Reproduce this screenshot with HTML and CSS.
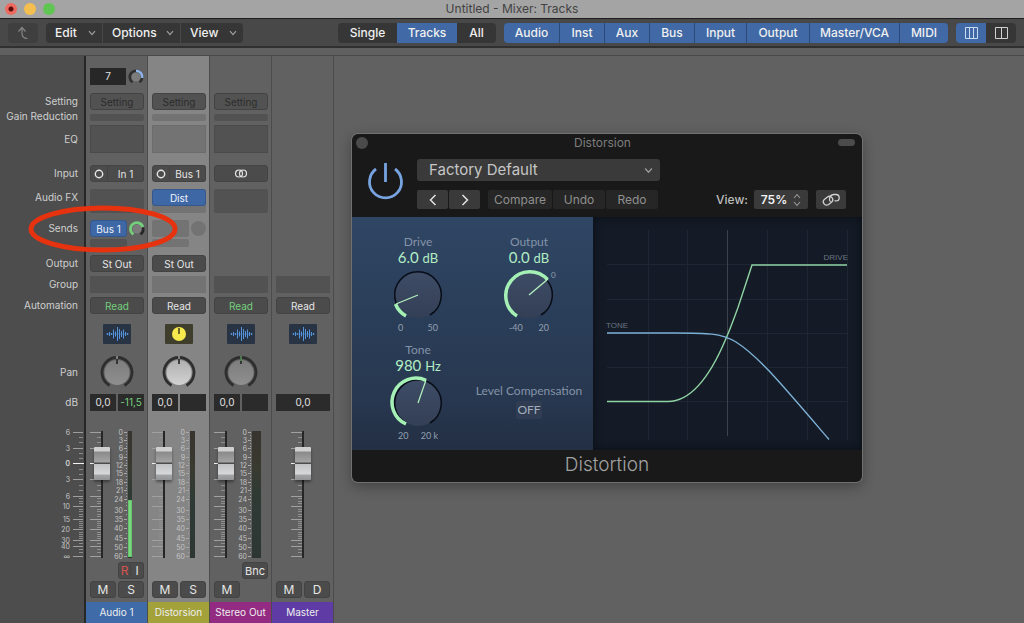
FILE: index.html
```html
<!DOCTYPE html>
<html lang="en">
<head>
<meta charset="utf-8">
<title>Untitled - Mixer: Tracks</title>
<link rel="stylesheet" href="styles.css">
</head>
<body>
<svg class="defs" width="0" height="0" aria-hidden="true">
  <defs>
    <symbol id="chevron" viewBox="0 0 8 6"><path d="M1 1.2 4 4.6 7 1.2" fill="none" stroke="currentColor" stroke-width="1.2"/></symbol>
    <symbol id="wave" viewBox="0 0 28 20">
      <path d="M4.500 9v2M6.500 8v4M8.500 9v2M10.500 5.500v9M12.500 7.500v5M14.500 3v14M16.500 5v10M18.500 7v6M20.500 5.500v9M22.500 8v4M24.500 9v2" stroke="#5593da"/>
      <path d="M3 10h23" stroke="#4f8fd6" stroke-width=".5"/>
    </symbol>
    <symbol id="ticks" viewBox="0 0 12 127" overflow="visible">
      <path d="M0 1.5h11M0 17.5h11M0 48.5h11M0 65.5h11M0 75.5h11M0 88.5h11M0 98.5h11M0 109.5h11M0 115.5h11M0 125.5h11" stroke="#a0a0a0"/>
      <path d="M0 32.5h4" stroke="#f2f2f2"/>
      <path d="M7 6.5h4M7 11.5h4M7 54.5h4M7 59.5h4M7 67.5h4M7 70.5h4M7 72.5h4M7 78.5h4M7 80.5h4M7 83.5h4M7 85.5h4M7 90.5h4M7 92.5h4M7 94.5h4M7 96.5h4M7 101.5h4M7 103.5h4M7 105.5h4M7 107.5h4M7 112.5h4M7 118.5h4M7 121.5h4" stroke="#8f8f8f"/>
    </symbol>
    <symbol id="meter-scale" viewBox="0 0 38 127" overflow="visible">
      <g class="scale-text" text-anchor="end">
        <text x="33" y="4">0</text><text x="33" y="12">3</text><text x="33" y="20">6</text><text x="33" y="29">9</text><text x="33" y="37">12</text><text x="33" y="45">15</text><text x="33" y="54">18</text><text x="33" y="62">21</text><text x="33" y="71">24</text><text x="33" y="82">30</text><text x="33" y="91">35</text><text x="33" y="100">40</text><text x="33" y="110">45</text><text x="33" y="119">50</text><text x="33" y="128">60</text>
      </g>
      <path d="M34 1.5h3M34 9.5h3M34 17.5h3M34 26.5h3M34 34.5h3M34 42.5h3M34 51.5h3M34 59.5h3M34 68.5h3M34 79.5h3M34 88.5h3M34 97.5h3M34 107.5h3M34 116.5h3M34 125.5h3" stroke="#a9a9a9"/>
      <path d="M36 4.5h1M36 7.5h1M36 12.5h1M36 15.5h1M36 20.5h1M36 23.5h1M36 29.5h1M36 32.5h1M36 37.5h1M36 40.5h1M36 45.5h1M36 48.5h1M36 54.5h1M36 57.5h1M36 62.5h1M36 65.5h1M36 71.5h1M36 74.5h1M36 83.5h1M36 92.5h1M36 102.5h1M36 112.5h1M36 121.5h1" stroke="#a0a0a0"/>
    </symbol>
    <linearGradient id="meter-off" x1="0" y1="0" x2="0" y2="1"><stop offset="0" stop-color="#37342e"/><stop offset=".3" stop-color="#393a30"/><stop offset=".5" stop-color="#2f3a35"/><stop offset="1" stop-color="#2d3633"/></linearGradient>
    <linearGradient id="pan-dim" x1="0" y1="0" x2="0" y2="1"><stop offset="0" stop-color="#7d7d7d"/><stop offset="1" stop-color="#8f8f8f"/></linearGradient>
    <linearGradient id="pan-lit" x1="0" y1="0" x2="0" y2="1"><stop offset="0" stop-color="#b0b0b0"/><stop offset="1" stop-color="#d2d2d2"/></linearGradient>
    <linearGradient id="dial" x1="0" y1="0" x2="0" y2="1"><stop offset="0" stop-color="#3e4c66"/><stop offset="1" stop-color="#333f55"/></linearGradient>
  </defs>
</svg>

<header class="titlebar">
  <span class="lights"><i class="light light-close"></i><i class="light light-min"></i><i class="light light-max"></i></span>
  <h1 class="window-title">Untitled - Mixer: Tracks</h1>
</header>

<nav class="toolbar">
  <button class="tool back" aria-label="Up one level"><svg width="12" height="14" viewBox="0 0 12 14"><path d="M1.500 5.500 5 1.500 8.500 5.500M5 2v5c0 4 2 5.500 5.500 5.500" fill="none" stroke="#858585" stroke-width="1.200"/></svg></button>
  <div class="group menus">
    <button class="tool">Edit <svg width="8" height="6"><use href="#chevron"/></svg></button>
    <button class="tool">Options <svg width="8" height="6"><use href="#chevron"/></svg></button>
    <button class="tool">View <svg width="8" height="6"><use href="#chevron"/></svg></button>
  </div>
  <div class="group scope">
    <button class="tool">Single</button><button class="tool on">Tracks</button><button class="tool">All</button>
  </div>
  <div class="group filters">
    <button class="tool on">Audio</button><button class="tool on">Inst</button><button class="tool on">Aux</button><button class="tool on">Bus</button><button class="tool on">Input</button><button class="tool on">Output</button><button class="tool on">Master/VCA</button><button class="tool on">MIDI</button>
  </div>
  <div class="group widths">
    <button class="tool on" aria-label="Narrow strips"><svg width="13" height="12" viewBox="0 0 13 12"><path d="M.5.5h12v11H.5zM4.500.5v11M8.500.5v11" fill="none" stroke="#c9daf2"/></svg></button>
    <button class="tool" aria-label="Wide strips"><svg width="13" height="12" viewBox="0 0 13 12"><path d="M.5.5h12v11H.5zM6.500.5v11" fill="none" stroke="#d0d0d0"/></svg></button>
  </div>
</nav>
<div class="substrip"></div>

<main class="mixer">
  <div class="labels rows">
    <span class="r-setting">Setting</span>
    <span class="r-gain">Gain Reduction</span>
    <span class="r-eq">EQ</span>
    <span class="r-input">Input</span>
    <span class="r-fx">Audio FX</span>
    <span class="r-sends">Sends</span>
    <span class="r-output">Output</span>
    <span class="r-group">Group</span>
    <span class="r-auto">Automation</span>
    <span class="r-pan">Pan</span>
    <span class="r-db">dB</span>
    <svg class="r-fader" width="24" height="127" viewBox="0 0 24 127">
      <g class="scale-text" text-anchor="end"><text x="10" y="4">6</text><text x="10" y="20">3</text><text x="10" y="35" class="zero">0</text><text x="10" y="51">3</text><text x="10" y="68">6</text><text x="10" y="78">10</text><text x="10" y="91">15</text><text x="10" y="101">20</text><text x="10" y="112">30</text><text x="10" y="118">40</text><text x="10" y="128">∞</text></g>
      <path d="M13 1.500h10M13 17.500h10M13 48.500h10M13 65.500h10M13 75.500h10M13 88.500h10M13 98.500h10M13 109.500h10M13 115.500h10M13 125.500h10" stroke="#9d9d9d"/>
      <path d="M13 32.500h11" stroke="#f2f2f2"/>
      <path d="M19 6.500h4M19 11.500h4M19 22.500h4M19 27.500h4M19 38.500h4M19 43.500h4M19 54.500h4M19 59.500h4M19 67.500h4M19 70.500h4M19 72.500h4M19 78.500h4M19 80.500h4M19 83.500h4M19 85.500h4M19 90.500h4M19 92.500h4M19 94.500h4M19 96.500h4M19 101.500h4M19 103.500h4M19 105.500h4M19 107.500h4M19 112.500h4M19 118.500h4M19 121.500h4" stroke="#8a8a8a"/>
    </svg>
  </div>

  <section class="strip rows" aria-label="Audio 1">
    <div class="r-track pair-knob">
      <output class="track-no">7</output>
      <svg width="16" height="16" viewBox="0 0 16 16"><circle cx="8" cy="8" r="4.500" fill="#7c7c7c"/><path d="M4.500 13.300A6.300 6.300 0 1 1 11.500 13.300" fill="none" stroke="#2e2e2e" stroke-width="2.500"/><path d="M8 1.700A6.300 6.300 0 0 1 14.200 9" fill="none" stroke="#8fb4e8" stroke-width="2.500"/></svg>
    </div>
    <button class="r-setting cell dim">Setting</button>
    <div class="r-gain well"></div>
    <div class="r-eq well square"></div>
    <div class="r-input split"><button class="cell" aria-label="Mono"><svg width="10" height="10" viewBox="0 0 10 10"><circle cx="5" cy="5" r="3.700" fill="none" stroke="#e6e6e6" stroke-width="1.400"/></svg></button><button class="cell">In 1</button></div>
    <div class="r-fx well"></div>
    <div class="r-sends sends">
      <button class="cell blue">Bus 1</button>
      <svg width="16" height="16" viewBox="0 0 16 16"><circle cx="8" cy="8" r="4.500" fill="#7c7c7c"/><path d="M14 6.500A6.300 6.300 0 0 1 11.500 13.300" fill="none" stroke="#262626" stroke-width="2.500"/><path d="M4.500 13.300A6.300 6.300 0 1 1 13.800 6" fill="none" stroke="#74cf7c" stroke-width="2.800"/></svg>
      <div class="well"></div>
    </div>
    <button class="r-output cell">St Out</button>
    <div class="r-group well square"></div>
    <button class="r-auto cell green">Read</button>
    <div class="r-icon thumb"><svg width="28" height="20"><use href="#wave"/></svg></div>
    <svg class="r-pan" width="34" height="32" viewBox="0 0 34 32"><path d="M9.500 29.500A15 15 0 1 1 24.500 29.500" fill="none" stroke="#2e2e2e" stroke-width="2.800"/><circle cx="17" cy="16.500" r="12.500" fill="url(#pan-dim)"/><path d="M17 0v8" stroke="#222" stroke-width="1.600"/><path d="M17 0v3" stroke="#ddd"/></svg>
    <div class="r-db split-db"><output>0,0</output><output class="green">-11,5</output></div>
    <div class="r-fader fader">
      <svg width="54" height="127" viewBox="0 0 54 127"><use href="#ticks" width="12" height="127"/><use href="#meter-scale" width="38" height="127"/><rect x="38" width="4" height="127" fill="url(#meter-off)"/><rect x="38" y="69" width="4" height="57" fill="#64c76c"/><path d="M40 70v55" stroke="#90e595"/></svg>
      <input type="range" min="0" max="100" value="83" aria-label="Audio 1 volume">
    </div>
    <div class="r-rec split right"><button class="cell red">R</button><button class="cell">I</button></div>
    <div class="r-ms two"><button class="cell big">M</button><button class="cell big">S</button></div>
    <h2 class="r-name name name-blue">Audio 1</h2>
  </section>

  <section class="strip rows selected" aria-label="Distorsion">
    <button class="r-setting cell dim">Setting</button>
    <div class="r-gain well"></div>
    <div class="r-eq well square"></div>
    <div class="r-input split"><button class="cell" aria-label="Mono"><svg width="10" height="10" viewBox="0 0 10 10"><circle cx="5" cy="5" r="3.700" fill="none" stroke="#e6e6e6" stroke-width="1.400"/></svg></button><button class="cell">Bus 1</button></div>
    <div class="r-fx well"><button class="cell blue">Dist</button></div>
    <div class="r-sends sends"><div class="well"></div><i class="dot"></i><div class="well"></div></div>
    <button class="r-output cell">St Out</button>
    <div class="r-group well square"></div>
    <button class="r-auto cell">Read</button>
    <div class="r-icon thumb thumb-aux"><svg width="28" height="20" viewBox="0 0 28 20"><circle cx="14" cy="10" r="7" fill="#f5e94d"/><path d="M14 4v6" stroke="#33301a" stroke-width="1.400"/></svg></div>
    <svg class="r-pan" width="34" height="32" viewBox="0 0 34 32"><path d="M9.500 29.500A15 15 0 1 1 24.500 29.500" fill="none" stroke="#2e2e2e" stroke-width="2.800"/><circle cx="17" cy="16.500" r="12.500" fill="url(#pan-lit)"/><path d="M17 0v8" stroke="#222" stroke-width="1.600"/><path d="M17 0v3" stroke="#ddd"/></svg>
    <div class="r-db split-db"><output>0,0</output><output></output></div>
    <div class="r-fader fader">
      <svg width="54" height="127" viewBox="0 0 54 127"><use href="#ticks" width="12" height="127"/><use href="#meter-scale" width="38" height="127"/><rect x="38" width="5" height="127" fill="url(#meter-off)"/></svg>
      <input type="range" min="0" max="100" value="83" aria-label="Distorsion volume">
    </div>
    <div class="r-ms two"><button class="cell big">M</button><button class="cell big">S</button></div>
    <h2 class="r-name name name-olive">Distorsion</h2>
  </section>

  <section class="strip rows" aria-label="Stereo Out">
    <button class="r-setting cell dim">Setting</button>
    <div class="r-gain well"></div>
    <div class="r-eq well square"></div>
    <button class="r-input cell" aria-label="Stereo"><svg width="14" height="9" viewBox="0 0 14 9"><g fill="none" stroke="#e4e4e4" stroke-width="1.200"><circle cx="5" cy="4.500" r="3.500"/><circle cx="9" cy="4.500" r="3.500"/></g></svg></button>
    <div class="r-fx well"></div>
    <div class="r-group well square"></div>
    <button class="r-auto cell green">Read</button>
    <div class="r-icon thumb"><svg width="28" height="20"><use href="#wave"/></svg></div>
    <svg class="r-pan" width="34" height="32" viewBox="0 0 34 32"><path d="M9.500 29.500A15 15 0 1 1 24.500 29.500" fill="none" stroke="#2e2e2e" stroke-width="2.800"/><circle cx="17" cy="16.500" r="12.500" fill="url(#pan-dim)"/><path d="M17 0v8" stroke="#222" stroke-width="1.600"/><path d="M17 0v5" stroke="#74cf7c"/></svg>
    <div class="r-db split-db"><output>0,0</output><output></output></div>
    <div class="r-fader fader">
      <svg width="54" height="127" viewBox="0 0 54 127"><use href="#ticks" width="12" height="127"/><use href="#meter-scale" width="38" height="127"/><rect x="38" width="9" height="127" fill="url(#meter-off)"/></svg>
      <input type="range" min="0" max="100" value="83" aria-label="Stereo Out volume">
    </div>
    <button class="r-rec cell right bounce">Bnc</button>
    <div class="r-ms two"><button class="cell big">M</button></div>
    <h2 class="r-name name name-magenta">Stereo Out</h2>
  </section>

  <section class="strip rows" aria-label="Master">
    <div class="r-group well square"></div>
    <button class="r-auto cell">Read</button>
    <div class="r-icon thumb"><svg width="28" height="20"><use href="#wave"/></svg></div>
    <div class="r-db split-db"><output>0,0</output></div>
    <div class="r-fader fader fader-center">
      <svg width="12" height="127" viewBox="0 0 12 127"><use href="#ticks" width="12" height="127"/></svg>
      <input type="range" min="0" max="100" value="83" aria-label="Master volume">
    </div>
    <div class="r-ms two"><button class="cell big">M</button><button class="cell big">D</button></div>
    <h2 class="r-name name name-violet">Master</h2>
  </section>

  <svg class="marker" width="156" height="48" viewBox="0 0 156 48" aria-hidden="true"><ellipse cx="78" cy="24" rx="72" ry="21" fill="none" stroke="#e6320f" stroke-width="5"/></svg>

  <section class="plugin" aria-label="Distorsion plug-in">
    <div class="plugin-title"><i class="plugin-close"></i><span>Distorsion</span><i class="plugin-pill"></i></div>
    <div class="plugin-head">
      <button class="power" aria-label="Power"><svg width="36" height="36" viewBox="0 0 36 36"><path d="M9 6A16 16 0 1 0 28 6M18.500 0v19" fill="none" stroke="#77a3e0" stroke-width="2.800"/></svg></button>
      <div class="plugin-bars">
        <button class="preset">Factory Default <svg width="9" height="7"><use href="#chevron"/></svg></button>
        <div class="plugin-row">
          <div class="pair"><button class="pbtn" aria-label="Previous"><svg width="8" height="12" viewBox="0 0 8 12"><path d="M6.500 1 1.500 6l5 5" fill="none" stroke="#e2e2e2" stroke-width="1.500"/></svg></button><button class="pbtn" aria-label="Next"><svg width="8" height="12" viewBox="0 0 8 12"><path d="M1.500 1l5 5-5 5" fill="none" stroke="#e2e2e2" stroke-width="1.500"/></svg></button></div>
          <div class="actions"><button class="pbtn faint">Compare</button><button class="pbtn faint">Undo</button><button class="pbtn faint">Redo</button></div>
          <div class="view"><span>View:</span><button class="pbtn zoom">75% <svg width="8" height="14" viewBox="0 0 8 14"><path d="M1 5 4 1.500 7 5M1 9l3 3.500L7 9" fill="none" stroke="#9a9a9a" stroke-width="1.100"/></svg></button><button class="pbtn link" aria-label="Link"><svg width="18" height="14" viewBox="0 0 18 14"><g fill="none" stroke="#d0d0d0" stroke-width="1.300"><rect x="1" y="4.500" width="10" height="6.500" rx="3.200" transform="rotate(-38 6 7.700)"/><path d="M8.500 8.800C6.500 7 7.500 2 11.500 1.500h2.500a3.200 3.200 0 0 1 0 6.400h-1.500"/></g></svg></button></div>
        </div>
      </div>
    </div>
    <div class="plugin-body">
      <div class="controls">
        <div class="dial">
          <span class="dial-label">Drive</span><span class="dial-value">6.0 <small>dB</small></span>
          <svg width="52" height="52" viewBox="-26 -26 52 52"><circle r="23" fill="url(#dial)"/><path d="M-12 20A23.300 23.300 0 1 1 12 20" fill="none" stroke="#080d18" stroke-width="1.500"/><path d="M-12 21A24 24 0 0 1 -22.500 9" fill="none" stroke="#a5f0b5" stroke-width="3.500"/><path d="M0 0-22 9" stroke="#b5f2c0" stroke-width="1.200"/></svg>
          <span class="dial-ends"><span>0</span><span>50</span></span>
        </div>
        <div class="dial">
          <span class="dial-label">Output</span><span class="dial-value">0.0 <small>dB</small></span>
          <svg width="52" height="52" viewBox="-26 -26 52 52"><circle r="23" fill="url(#dial)"/><path d="M-12 20A23.300 23.300 0 1 1 12 20" fill="none" stroke="#080d18" stroke-width="1.500"/><path d="M-12 21A24 24 0 1 1 18.500 -15.500" fill="none" stroke="#a5f0b5" stroke-width="3.500"/><path d="M0 0 19-16" stroke="#b5f2c0" stroke-width="1.200"/><text class="dial-mark" x="22" y="-17">0</text></svg>
          <span class="dial-ends"><span>-40</span><span>20</span></span>
        </div>
        <div class="dial">
          <span class="dial-label">Tone</span><span class="dial-value">980 <small>Hz</small></span>
          <svg width="52" height="52" viewBox="-26 -26 52 52"><circle r="23" fill="url(#dial)"/><path d="M-12 20A23.300 23.300 0 1 1 12 20" fill="none" stroke="#080d18" stroke-width="1.500"/><path d="M-12 21A24 24 0 1 1 8 -22.700" fill="none" stroke="#a5f0b5" stroke-width="3.500"/><path d="M0 0 8-23" stroke="#b5f2c0" stroke-width="1.200"/></svg>
          <span class="dial-ends"><span>20</span><span>20 k</span></span>
        </div>
        <div class="comp"><span id="comp">Level Compensation</span><button class="off" aria-describedby="comp">OFF</button></div>
      </div>
      <svg class="graph" viewBox="593 217 269 233" preserveAspectRatio="xMidYMid meet">
        <path d="M648.500 230v210M687.500 230v210M767.500 230v210M807.500 230v210M847.500 230v210M607 264.500h240M607 299.500h240M607 333.500h240M607 367.500h240M607 401.500h240" stroke="#1d2633"/>
        <path d="M727.500 230v206" stroke="#3a434e"/>
        <path d="M607 401.500h61c26 0 45-32 58-63 4-9 8-20 12-31l14-42.500h95" fill="none" stroke="#8fd3a4" stroke-width="1.400"/>
        <path d="M607 333h68c32 0 46 0 61 9 22 14 42 38 93 97.500" fill="none" stroke="#7db0d6" stroke-width="1.400"/>
        <text x="606" y="328">TONE</text><text x="848" y="260" text-anchor="end">DRIVE</text>
      </svg>
    </div>
    <div class="plugin-foot">Distortion</div>
  </section>
</main>
</body>
</html>
```
FILE: styles.css
```css
* { box-sizing: border-box; }
body {
  margin: 0;
  min-height: 100vh;
  display: flex;
  flex-direction: column;
  background: #616161;
  color: #e2e2e2;
  font: 10px/12px Inter, "Liberation Sans", sans-serif;
}
button {
  margin: 0;
  padding: 0;
  border: 0;
  color: inherit;
  font: inherit;
  white-space: nowrap;
}
svg { display: block; overflow: visible; }
.defs { position: absolute; }

.titlebar {
  height: 19px;
  display: grid;
  grid-template-columns: 1fr auto 1fr;
  align-items: center;
  padding: 0 5px;
  background: #a4a4a4;
  border-bottom: 1px solid #1e1e1e;
}
.lights { display: flex; gap: 7px; }
.light { width: 12px; height: 12px; border-radius: 50%; }
.light-close { background: radial-gradient(circle, #5a0c08 0 2px, #ec6a5f 3px); }
.light-min { background: #f5bf4f; }
.light-max { background: #61c554; }
.window-title { margin: 0; font-size: 12px; line-height: 16px; font-weight: 400; color: #424242; }

.toolbar {
  height: 29px;
  display: flex;
  align-items: center;
  gap: 8px;
  padding: 0 8px;
  background: #484848;
  border-bottom: 2px solid #303030;
}
.group { display: grid; gap: 1px; height: 20px; border-radius: 4px; overflow: hidden; }
.tool {
  display: flex;
  align-items: center;
  justify-content: center;
  height: 20px;
  background: #363636;
  font-size: 12px;
  font-weight: 500;
  color: #f0f0f0;
}
.tool.on { background: #4069a6; }
.back { width: 30px; border-radius: 4px; background: #3f3f3f; }
.menus { grid-template-columns: 56px 77px 62px; margin-right: auto; }
.menus .tool { justify-content: space-between; padding: 0 6px 0 9px; }
.menus svg { color: #a0a0a0; }
.scope { grid-template-columns: 59px 60px 39px; gap: 0; }
.filters { grid-template-columns: 55px 44px 44px 44px 51px 62px 89px 48px; background: #2c4a78; }
.widths { grid-template-columns: 30px 30px; gap: 0; }
.substrip { height: 8px; background: #606060; border-bottom: 1px solid #4a4a4a; }

.mixer { position: relative; flex: 1; display: flex; }
.rows {
  display: grid;
  grid-template-rows: 29px 25px 11px 32px 29px 31px 34px 25px 21px 21px 30px 44px 23px minmax(147px, 1fr) 21px 19px 25px;
  grid-template-columns: minmax(0, 1fr);
  align-items: end;
}
.r-track { grid-row: 1; }
.r-setting { grid-row: 2; }
.r-gain { grid-row: 3; }
.r-eq { grid-row: 4; }
.r-input { grid-row: 5; }
.r-fx { grid-row: 6; }
.r-sends { grid-row: 7; }
.r-output { grid-row: 8; }
.r-group { grid-row: 9; }
.r-auto { grid-row: 10; }
.r-icon { grid-row: 11; }
.r-pan { grid-row: 12; justify-self: center; }
.r-db { grid-row: 13; }
.r-fader { grid-row: 14; }
.r-rec { grid-row: 15; }
.r-ms { grid-row: 16; }
.r-name { grid-row: 17; }

.labels {
  width: 86px;
  background: #4d4d4d;
  border-right: 2px solid #272727;
  color: #cfcfcf;
  text-align: right;
}
.labels span { line-height: 17px; padding-right: 6px; white-space: nowrap; }
.labels .r-gain { line-height: 9px; }
.labels .r-eq { line-height: 27px; }
.labels .r-fx { padding-bottom: 7px; }
.labels .r-sends { padding-bottom: 10px; }
.labels .r-pan { justify-self: end; line-height: 32px; }
.labels .r-fader { justify-self: end; }
.scale-text { font-size: 7px; fill: #c4c4c4; }
.zero { fill: #fff; }

.strip {
  width: 62px;
  padding: 0 3px 0 4px;
  background: #616161;
  border-right: 1px solid #4c4c4c;
}
.selected { background: #858585; }
.cell {
  display: flex;
  align-items: center;
  justify-content: center;
  height: 17px;
  border-radius: 3px;
  background: #4b4b4b;
  border: 1px solid #434343;
  color: #e6e6e6;
}
.cell.dim { color: #2c2c2c; background: #525252; }
.cell.blue { background: #3e67a5; border-color: #34578c; color: #eef3fb; }
.cell.green, .green { color: #74cf7c; }
.cell.red { color: #d9534c; font-size: 12px; }
.cell.red + .cell { font-size: 12px; }
.cell.big { font-size: 12px; }
.well { height: 7px; border-radius: 2px; background: #525252; }
.selected .well { background: #737373; }
.r-eq.well { height: 28px; border: 1px solid #4a4a4a; }
.selected .r-eq.well { border-color: #6c6c6c; }
.r-fx.well { height: 24px; }
.r-fx .cell { width: 100%; }
.r-group.well { height: 17px; }
.square { border-radius: 0; }

.pair-knob { display: flex; gap: 2px; align-items: center; }
.track-no { width: 37px; height: 17px; line-height: 17px; text-align: center; background: #272727; }
.split { display: grid; grid-template-columns: 18px 1fr; }
.split .cell:first-child { border-radius: 3px 0 0 3px; }
.split .cell:last-child { border-radius: 0 3px 3px 0; border-left: 0; }
.split.right { width: 26px; grid-template-columns: 13px 13px; }
.right { justify-self: end; }
.bounce { width: 26px; font-size: 11px; }
.sends { display: grid; grid-template-columns: 37px 16px; grid-template-rows: 17px 8px; gap: 2px; align-items: center; }
.sends .well { height: 17px; }
.sends .well:last-child { height: 8px; }
.dot { width: 15px; height: 15px; border-radius: 50%; background: #737373; }
.thumb { justify-self: center; width: 28px; height: 20px; background: #283444; border-radius: 1px; }
.thumb-aux { background: #3f3e2c; }
.split-db { display: grid; grid-auto-flow: column; grid-auto-columns: 1fr; gap: 2px; }
.split-db output { height: 17px; line-height: 17px; text-align: center; background: #2b2b2b; }
.two { display: grid; grid-template-columns: 26px 26px; gap: 2px; }

.fader { display: grid; justify-content: start; }
.fader > * { grid-area: 1 / 1; }
.fader-center { padding-left: 15px; }
.fader input {
  writing-mode: vertical-lr;
  direction: rtl;
  appearance: none;
  width: 16px;
  height: 127px;
  margin: 0 0 0 4px;
  background: linear-gradient(#262626, #262626) center / 2px 100% no-repeat;
}
.fader input::-webkit-slider-thumb {
  appearance: none;
  width: 16px;
  height: 33px;
  border-radius: 1px;
  background: linear-gradient(#d0d0d0 0 4px, #8a8a8a 5px, #a4a4a4 15px, #4c4c4c 16px 17px, #c0c2c4 17px, #d6d8da 27px, #a3a5a7 28px, #929496 33px);
  box-shadow: 0 2px 3px #0006;
}
.name {
  height: 21px;
  margin: 0 -3px 0 -4px;
  font-size: 10px;
  line-height: 21px;
  font-weight: 400;
  text-align: center;
  white-space: nowrap;
  color: #eeeeee;
}
.name-blue { background: #3f6ba9; }
.name-olive { background: #a3a23a; }
.name-magenta { background: #932b82; }
.name-violet { background: #5f3ba6; }

.marker { position: absolute; left: 25px; top: 149px; }

.plugin {
  position: absolute;
  left: 352px;
  top: 78px;
  width: 510px;
  border-radius: 6px;
  overflow: hidden;
  background: #191919;
  box-shadow: 0 0 0 1px #707070, 0 4px 14px #0005;
}
.plugin-title { display: grid; grid-template-columns: 1fr auto 1fr; align-items: center; height: 17px; padding: 0 7px 0 4px; font-size: 12px; line-height: 16px; color: #7d7d7d; }
.plugin-title span { margin-right: 6px; }
.plugin-close { width: 12px; height: 12px; border-radius: 50%; background: #4b4b4b; }
.plugin-pill { justify-self: end; width: 17px; height: 7px; border-radius: 4px; background: #4b4b4b; }
.plugin-head { display: flex; gap: 14px; height: 66px; padding: 8px 16px 0 15px; }
.power { width: 36px; height: 40px; background: none; }
.power svg { margin-top: 4px; }
.plugin-bars { flex: 1; }
.preset { display: flex; align-items: center; justify-content: space-between; width: 243px; height: 22px; padding: 0 7px 0 12px; border-radius: 3px; background: #3a3a3a; font-size: 15px; color: #c6c6c6; }
.preset svg { color: #999; }
.plugin-row { display: flex; margin-top: 9px; }
.pair { display: grid; grid-template-columns: 31px 31px; gap: 1px; margin-right: 8px; }
.actions { display: grid; grid-template-columns: 64px 52px 52px; gap: 1px; }
.view { display: flex; align-items: center; gap: 8px; margin-left: auto; font-size: 12px; color: #bdbdbd; font-weight: 500; }
.view span { margin-right: -2px; }
.view .zoom { width: 54px; gap: 6px; color: #f2f2f2; font-weight: 600; }
.link { width: 30px; }
.pbtn { display: flex; align-items: center; justify-content: center; height: 19px; border-radius: 2px; background: #3a3a3a; font-size: 12px; }
.faint { background: #262626; color: #8f8f8f; }
.plugin-body { display: grid; grid-template-columns: 241px 1fr; grid-template-rows: 233px; }
.controls {
  display: grid;
  grid-template-columns: 132px 90px;
  grid-template-rows: 108px 100px;
  padding-top: 18px;
  background: linear-gradient(#2f4664, #27374f 80%, #232f43);
  font-family: Lato, sans-serif;
}
.dial { display: flex; flex-direction: column; align-items: center; }
.dial-label { font-size: 12px; line-height: 14px; color: #8493a8; }
.dial-value { font-size: 15px; line-height: 17px; color: #b2edc4; }
.dial-value small { font-size: 13px; }
.dial-ends { display: flex; justify-content: space-between; width: 40px; margin-top: 1px; font-size: 9px; line-height: 12px; color: #93a0b0; }
.dial svg { margin-top: 2px; }
.dial-mark { font-size: 8px; fill: #93a0b0; }
.comp { display: flex; flex-direction: column; align-items: center; gap: 2px; padding-top: 40px; font-size: 12px; line-height: 16px; white-space: nowrap; color: #8493a8; }
.off { width: 26px; height: 18px; border-radius: 2px; background: #2f3c52; color: #a4aebb; }
.graph { width: 100%; height: 100%; background: #141b26; box-shadow: inset 0 0 10px #0a0e16; }
.graph text { font: 8px "Liberation Sans", sans-serif; fill: #6a7482; }
.plugin-foot { height: 32px; font-size: 19px; line-height: 30px; font-weight: 300; text-align: center; color: #a2a2a2; }
```
